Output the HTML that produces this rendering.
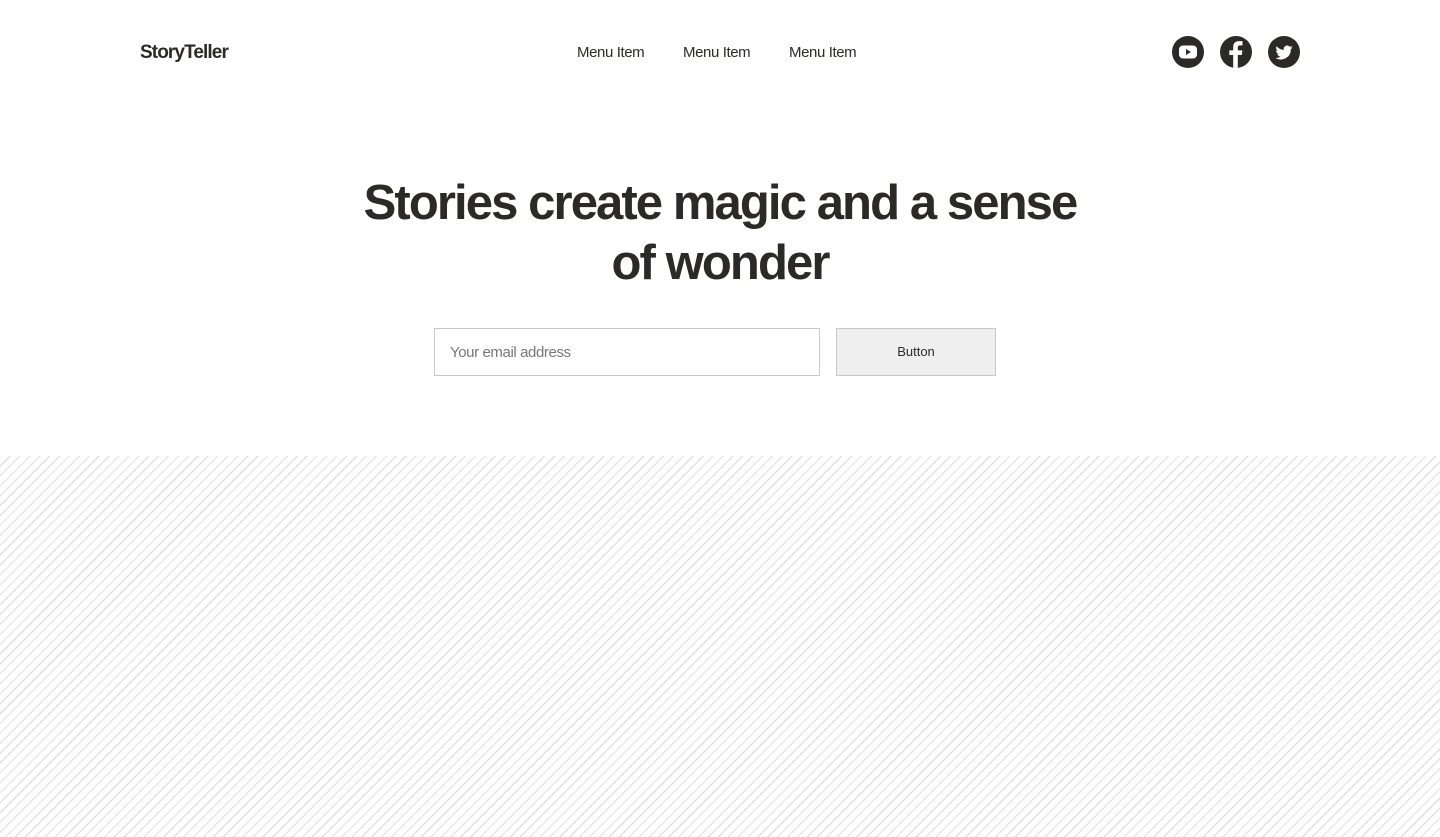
<!DOCTYPE html>
<html><head><meta charset="utf-8"><style>
*{margin:0;padding:0;box-sizing:border-box}
body{width:1440px;height:837px;overflow:hidden;background:#fff;font-family:"Liberation Sans",sans-serif;color:#2b2a26}
.logo{position:absolute;left:140px;top:42px;font-size:19px;font-weight:bold;letter-spacing:-0.9px}
.nav{position:absolute;top:44px;font-size:15px;letter-spacing:-0.4px}
.icons{position:absolute;left:1172px;top:36px;display:flex;gap:16px}
h1{position:absolute;left:0;width:1440px;top:173px;text-align:center;font-size:49px;line-height:60px;font-weight:bold;letter-spacing:-1.9px}
.inp{position:absolute;left:434px;top:328px;width:386px;height:48px;border:1px solid #c8c8c8;font-size:15px;color:#777;padding:15px 15px;letter-spacing:-0.4px}
.btn{position:absolute;left:836px;top:328px;width:160px;height:48px;border:1px solid #c8c8c8;background:#efefef;font-size:13px;text-align:center;line-height:46px}
.pat{position:absolute;left:0;top:456px;width:1440px;height:381px;background:repeating-linear-gradient(-45deg,#fff 0,#fff 5.8px,#e0e0e0 5.8px,#e0e0e0 7px)}
</style></head><body>
<div class="logo">StoryTeller</div>
<div class="nav" style="left:577px">Menu Item</div>
<div class="nav" style="left:683px">Menu Item</div>
<div class="nav" style="left:789px">Menu Item</div>
<div class="icons">
<svg width="32" height="32" viewBox="0 0 32 32"><circle cx="16" cy="16" r="16" fill="#2b2a26"/><rect x="7" y="9.5" width="18" height="13" rx="4" fill="#fff"/><path d="M14 13v6l5-3z" fill="#2b2a26"/></svg>
<svg width="32" height="32" viewBox="0 0 32 32"><circle cx="16" cy="16" r="16" fill="#2b2a26"/><path d="M17.8 32V19h4l.6-4.6h-4.6v-2.8c0-1.3.4-2.2 2.3-2.2h2.4V5.3c-.4-.1-1.8-.2-3.5-.2-3.5 0-5.8 2.1-5.8 6v3.3h-3.9V19h3.9v13z" fill="#fff"/></svg>
<svg width="32" height="32" viewBox="0 0 32 32"><circle cx="16" cy="16" r="16" fill="#2b2a26"/><path d="M24.5 11.2c-.6.3-1.3.5-2 .6.7-.4 1.3-1.1 1.5-1.9-.7.4-1.4.7-2.2.8a3.5 3.5 0 0 0-6 3.2c-2.9-.1-5.5-1.5-7.2-3.6-.9 1.600-.4 3.6 1.1 4.6-.6 0-1.1-.2-1.6-.4 0 1.7 1.2 3.2 2.8 3.5-.5.1-1.1.2-1.6.1.5 1.4 1.800 2.4 3.3 2.4A7 7 0 0 1 7.5 22a10 10 0 0 0 15.3-8.9c.7-.5 1.3-1.1 1.7-1.9z" fill="#fff"/></svg>
</div>
<h1>Stories create magic and a sense<br>of wonder</h1>
<div class="inp">Your email address</div>
<div class="btn">Button</div>
<div class="pat"></div>
</body></html>
